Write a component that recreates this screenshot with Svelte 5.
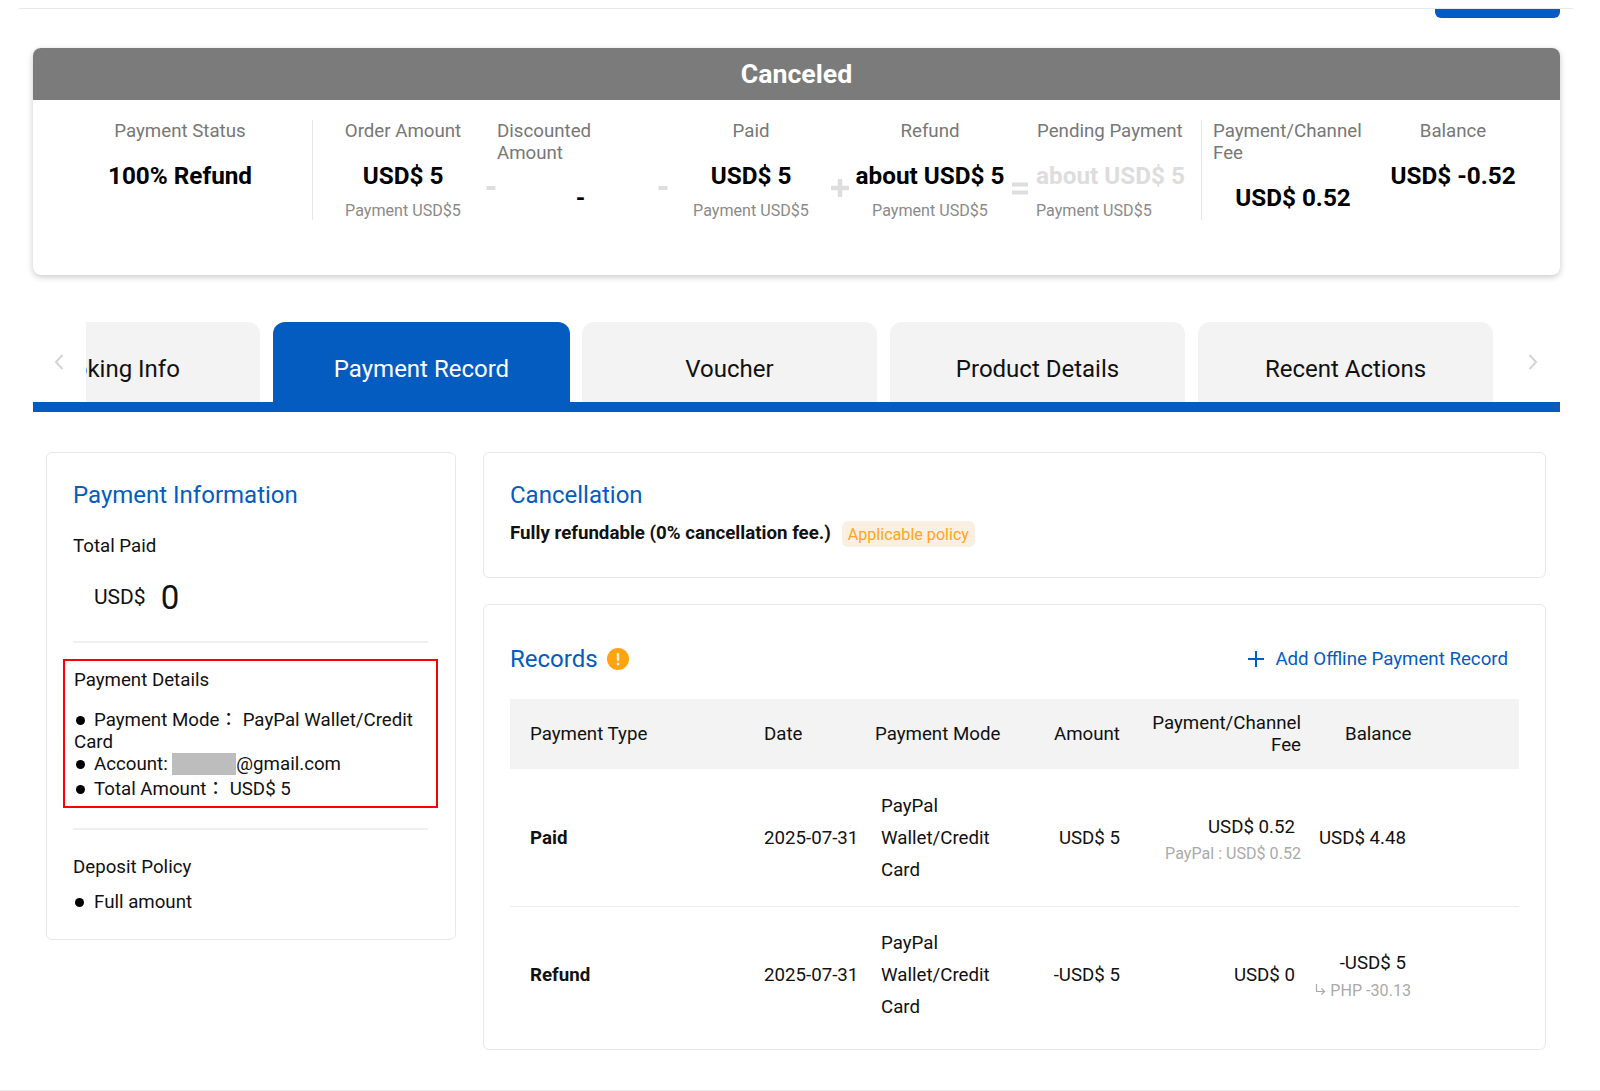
<script>
  const rows = [
    { type: 'Paid', date: '2025-07-31', amount: 'USD$ 5', fee: 'USD$ 0.52', feeSub: 'PayPal : USD$ 0.52', balance: 'USD$ 4.48' },
    { type: 'Refund', date: '2025-07-31', amount: '-USD$ 5', fee: 'USD$ 0', balance: '-USD$ 5', balanceSub: 'PHP -30.13' }
  ];
</script>

<div class="page">
  <div class="topbar"><div class="topnub"></div></div>

  <section class="summary">
    <h1 class="banner">Canceled</h1>
    <div class="figures">
      <div class="fig status">
        <div class="label">Payment Status</div>
        <div class="value">100% Refund</div>
      </div>
      <div class="rule"></div>
      <div class="fig order">
        <div class="label">Order Amount</div>
        <div class="value">USD$ 5</div>
        <div class="sub">Payment USD$5</div>
      </div>
      <div class="op"><svg width="10" height="30" viewBox="0 0 10 30"><rect x="0.500" y="13" width="9" height="4" fill="#dedede" /></svg></div>
      <div class="fig discounted">
        <div class="label left">Discounted<br />Amount</div>
        <div class="value">-</div>
      </div>
      <div class="op"><svg width="10" height="30" viewBox="0 0 10 30"><rect x="0.500" y="13" width="9" height="4" fill="#dedede" /></svg></div>
      <div class="fig paid">
        <div class="label">Paid</div>
        <div class="value">USD$ 5</div>
        <div class="sub">Payment USD$5</div>
      </div>
      <div class="op wide"><svg width="18" height="30" viewBox="0 0 18 30"><path d="M0 15h18M9 6v18" stroke="#dedede" stroke-width="4.500" /></svg></div>
      <div class="fig refund">
        <div class="label">Refund</div>
        <div class="value">about USD$ 5</div>
        <div class="sub">Payment USD$5</div>
      </div>
      <div class="op wide"><svg width="16" height="30" viewBox="0 0 16 30"><path d="M0 11.500h16M0 19.500h16" stroke="#dedede" stroke-width="4" /></svg></div>
      <div class="fig pending">
        <div class="label">Pending Payment</div>
        <div class="value faded">about USD$ 5</div>
        <div class="sub">Payment USD$5</div>
      </div>
      <div class="rule"></div>
      <div class="fig fee">
        <div class="label left">Payment/Channel Fee</div>
        <div class="value">USD$ 0.52</div>
      </div>
      <div class="fig balance">
        <div class="label">Balance</div>
        <div class="value">USD$ -0.52</div>
      </div>
    </div>
  </section>

  <nav class="tabbar">
    <svg class="chev" width="12" height="18" viewBox="0 0 12 18"><path d="M9.500 2 3 9l6.500 7" fill="none" stroke="#d4d4d4" stroke-width="2" /></svg>
    <div class="tabview">
      <div class="tab first">Booking Info</div>
      <div class="tab active">Payment Record</div>
      <div class="tab">Voucher</div>
      <div class="tab">Product Details</div>
      <div class="tab">Recent Actions</div>
    </div>
    <svg class="chev next" width="12" height="18" viewBox="0 0 12 18"><path d="M2.500 2 9 9l-6.500 7" fill="none" stroke="#d4d4d4" stroke-width="2" /></svg>
  </nav>

  <div class="content">
    <aside class="panel info">
      <h2>Payment Information</h2>
      <div class="plain total-label">Total Paid</div>
      <div class="total"><span class="cur">USD$</span><span class="zero">0</span></div>
      <hr />
      <div class="redbox">
        <div class="plain">Payment Details</div>
        <div class="details">
          <div class="bul"><i></i>Payment Mode： PayPal Wallet/Credit Card</div>
          <div class="bul acct"><i></i>Account: <span class="mask"></span>@gmail.com</div>
          <div class="bul amt"><i></i>Total Amount： USD$ 5</div>
        </div>
      </div>
      <hr class="second" />
      <div class="plain deposit">Deposit Policy</div>
      <div class="bul full"><i></i>Full amount</div>
    </aside>

    <div class="main">
      <section class="panel cancel">
        <h2>Cancellation</h2>
        <div class="policy"><strong>Fully refundable (0% cancellation fee.)</strong><span class="tag">Applicable policy</span></div>
      </section>

      <section class="panel records">
        <div class="rec-head">
          <div class="rec-title">
            <h2>Records</h2>
            <svg width="22" height="22" viewBox="0 0 22 22"><circle cx="11" cy="11" r="11" fill="#ffa30f" /><rect x="9.800" y="5" width="2.400" height="8" rx="1" fill="#fff2d9" /><circle cx="11" cy="16" r="1.400" fill="#fff2d9" /></svg>
          </div>
          <div class="add">
            <svg width="16" height="16" viewBox="0 0 16 16"><path d="M0 8h16M8 0v16" stroke="#045cc1" stroke-width="2" /></svg>
            Add Offline Payment Record
          </div>
        </div>

        <div class="table">
          <div class="row thead">
            <div class="c-type">Payment Type</div>
            <div class="c-date">Date</div>
            <div class="c-mode">Payment Mode</div>
            <div class="c-amt">Amount</div>
            <div class="c-fee">Payment/Channel Fee</div>
            <div class="c-bal">Balance</div>
          </div>
          {#each rows as r}
            <div class="row tbody">
              <div class="c-type"><strong>{r.type}</strong></div>
              <div class="c-date">{r.date}</div>
              <div class="c-mode body-mode">PayPal Wallet/Credit Card</div>
              <div class="c-amt">{r.amount}</div>
              <div class="c-fee body-fee" class:raised={r.feeSub}>
                <div>{r.fee}</div>
                {#if r.feeSub}<div class="mini">{r.feeSub}</div>{/if}
              </div>
              <div class="c-bal body-bal" class:stacked={r.balanceSub}>
                <div>{r.balance}</div>
                {#if r.balanceSub}
                  <div class="mini conv">
                    <svg width="11" height="12" viewBox="0 0 11 12"><path d="M1.500 0v7.500h8M6.500 4.500l3 3-3 3" fill="none" stroke="#aaa" stroke-width="1.200" /></svg>
                    {r.balanceSub}
                  </div>
                {/if}
              </div>
            </div>
          {/each}
        </div>
      </section>
    </div>
  </div>
  <div class="bottomline"></div>
</div>

<style>
  :global(body) { margin: 0; background: #fff; }
  .page {
    width: 1600px; height: 1091px; overflow: hidden; box-sizing: border-box;
    font-family: Roboto, "Noto Sans CJK TC", "Liberation Sans", sans-serif; color: #111; font-size: 18.7px;
    display: flex; flex-direction: column; position: relative;
  }
  .topbar {
    margin: 8px 27px 0 19px; height: 10px; border-top: 1px solid #e8e8e8;
    display: flex; justify-content: flex-end; padding-right: 13px;
  }
  .topnub { width: 125px; height: 9px; background: #045cc1; border-radius: 0 0 6px 6px; }

  .summary {
    margin: 29px 40px 0 33px; height: 227px; border-radius: 8px; overflow: hidden;
    box-shadow: 0 2px 6px rgba(0,0,0,.22); background: #fff;
  }
  .banner {
    margin: 0; height: 52px; line-height: 52px; background: #7b7b7b; color: #fff; text-align: center;
    font-size: 26.700px; font-weight: 700;
  }
  .figures { display: flex; padding-top: 20px; height: 101px; }
  .rule { width: 1px; height: 100px; background: #e6e6e6; flex: none; }
  .fig { flex: none; display: flex; flex-direction: column; box-sizing: border-box; }
  .label { color: #777; line-height: 22px; text-align: center; font-size: 18.700px; }
  .label.left { text-align: left; }
  .value { font-size: 24.300px; font-weight: 700; line-height: 32px; margin-top: 18px; text-align: center; color: #000; white-space: nowrap; }
  .value.faded { color: #ddd; text-align: left; }
  .sub { color: #8a8a8a; font-size: 16.100px; line-height: 22px; margin-top: 8px; text-align: center; }
  .status { width: 279px; padding-left: 15px; }
  .order { width: 172px; padding-left: 8px; }
  .op { flex: none; width: 12px; display: flex; justify-content: center; padding-top: 53px; height: 30px; }
  .op svg { flex: none; }
  .op.wide { width: 14px; }
  .discounted { width: 160px; }
  .discounted .value { padding-left: 7px; }
  .paid { width: 164px; }
  .refund { width: 166px; }
  .pending { width: 174px; padding-left: 9px; }
  .pending .label { text-align: left; white-space: nowrap; padding-left: 1px; }
  .pending .sub { text-align: left; }
  .fee { width: 171px; padding-left: 11px; }
  .balance { width: 160px; }

  .tabbar { margin: 47px 40px 0 33px; height: 90px; border-bottom: 10px solid #045cc1; display: flex; align-items: flex-start; box-sizing: border-box; }
  .chev { flex: none; margin: 31px 20px 0 20px; }
  .chev.next { margin-left: 34px; }
  .tabview { width: 1407px; overflow: hidden; display: flex; gap: 13px; height: 80px; margin-left: 1px; flex: none; }
  .tab {
    flex: none; width: 295px; height: 80px; line-height: 94px; text-align: center; background: #f3f3f3;
    border-radius: 12px 12px 0 0; font-size: 24px; color: #111;
  }
  .tab.first { margin-left: -121px; }
  .tab.active { background: #045cc1; color: #fff; width: 297px; margin-right: -1px; }

  .content { display: flex; gap: 26px; margin: 40px 0 0 46px; align-items: flex-start; }
  .panel { border: 1px solid #e8e8e8; border-radius: 6px; box-sizing: border-box; background: #fff; }
  h2 { margin: 0; font-size: 24px; font-weight: 400; color: #045cc1; line-height: 32px; }
  .info { width: 410px; height: 488px; padding: 26px 27px 0 26px; }
  .plain { line-height: 24px; }
  .total-label { margin-top: 23px; }
  .total { display: flex; align-items: center; gap: 15px; padding-left: 21px; margin-top: 18px; height: 42px; }
  .cur { font-size: 21px; }
  .zero { font-size: 33px; }
  hr { border: 0; border-top: 2px solid #f0f0f0; margin: 23px 0 0 0; }
  .redbox { margin: 16px -10px 0 -10px; border: 2px solid #f00; padding: 7px 8px 4px 9px; height: 149px; box-sizing: border-box; }
  .details { margin-top: 17px; }
  .bul { line-height: 22px; }
  .bul i { display: inline-block; width: 9px; height: 9px; border-radius: 50%; background: #000; margin: 0 9px 2px 2px; vertical-align: middle; }
  .amt { margin-top: 3px; }
  .mask { display: inline-block; width: 64px; height: 22px; background: #bdbdbd; vertical-align: top; }
  .second { margin-top: 20px; }
  .deposit { margin-top: 25px; }
  .full { margin-top: 11px; line-height: 24px; }
  .full i { margin-right: 10px; }

  .main { display: flex; flex-direction: column; gap: 26px; width: 1063px; margin-left: 1px; }
  .cancel { height: 126px; padding: 26px 26px 0; }
  .policy { display: flex; align-items: center; margin-top: 8px; }
  .policy strong { font-weight: 700; }
  .tag { margin-left: 11px; background: #faf0e2; color: #ffa61a; font-size: 16.100px; padding: 0 6px; height: 26px; line-height: 27px; border-radius: 6px; margin-top: 2px; }
  .records { height: 446px; padding: 0 26px; }
  .rec-head { display: flex; justify-content: space-between; align-items: center; height: 94px; box-sizing: border-box; padding: 13px 11px 0 0; }
  .rec-title { display: flex; align-items: center; gap: 9px; }
  .add { display: flex; align-items: center; gap: 11px; color: #045cc1; }
  .table { width: 1009px; }
  .row { display: grid; grid-template-columns: 254px 111px 125px 120px 181px 1fr; align-items: center; }
  .row > div:first-child { padding-left: 20px; }
  .thead { background: #f3f3f3; height: 70px; }
  .thead .c-mode { white-space: nowrap; }
  .tbody { height: 137px; border-bottom: 1px solid #ececec; }
  .tbody:last-child { border-bottom: 0; height: 135px; }
  .tbody strong { font-weight: 700; }
  .c-amt { text-align: right; }
  .c-fee { text-align: right; line-height: 22px; }
  .thead .c-fee { padding-left: 20px; }
  .thead .c-bal { padding-left: 44px; }
  .body-mode { padding-left: 6px; line-height: 32px; }
  .body-fee { padding-right: 6px; }
  .body-fee.raised { padding-top: 6px; }
  .body-fee .mini { margin-right: -6px; margin-top: 5px; }
  .body-bal { width: 105px; text-align: right; }
  .body-bal.stacked { padding-top: 5px; }
  .mini { font-size: 16.100px; color: #aaa; line-height: 22px; }
  .conv { margin-top: 6px; margin-right: -5px; white-space: nowrap; }
  .bottomline { position: absolute; left: 0; right: 0; bottom: 0; border-top: 1px solid #e8e8e8; }
</style>
